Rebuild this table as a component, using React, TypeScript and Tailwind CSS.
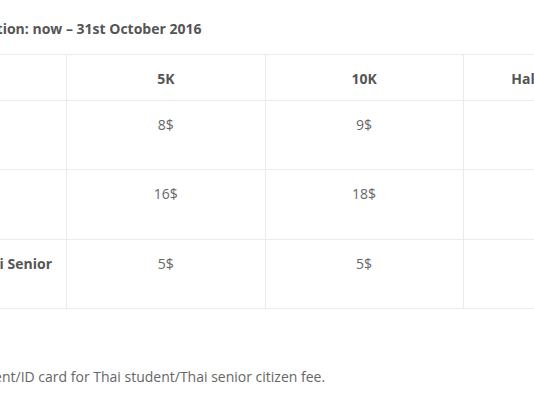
const rows = [
  { label: "Thai", values: ["8$", "9$", "10$"] },
  { label: "Foreigner", values: ["16$", "18$", "20$"] },
  { label: "Thai Student/Thai Senior", values: ["5$", "5$", "5$"] },
];

export default function App() {
  return (
    <div className="h-[404px] w-[534px] overflow-hidden bg-white font-['Open_Sans',sans-serif] text-[14px] text-[#666]">
      <div className="-ml-[132px] w-[794px] pt-[17px]">
        <h3 className="mb-[13px] text-[14px] font-bold leading-[24px] text-[#555]">
          Early Bird Registration: now – 31st October 2016
        </h3>
        <table className="w-full table-fixed border-collapse">
          <thead>
            <tr className="h-[46px]">
              <th className="border border-[#ebebeb] align-top"></th>
              <th className="border border-[#ebebeb] pt-[12px] align-top text-[14px] leading-[24px] font-bold text-[#555]">5K</th>
              <th className="border border-[#ebebeb] pt-[12px] align-top text-[14px] leading-[24px] font-bold text-[#555]">10K</th>
              <th className="border border-[#ebebeb] pt-[12px] align-top text-[14px] leading-[24px] font-bold text-[#555]">Half Marathon</th>
            </tr>
          </thead>
          <tbody>
            {rows.map((r, i) => (
              <tr key={r.label} className={i === 1 ? "h-[70px]" : "h-[69px]"}>
                <td className="whitespace-nowrap border border-[#ebebeb] pt-[12px] pl-[10px] align-top leading-[24px] font-bold text-[#555]">
                  {r.label}
                </td>
                {r.values.map((v, j) => (
                  <td key={j} className="border border-[#ebebeb] pt-[12px] text-center align-top leading-[24px]">
                    {v}
                  </td>
                ))}
              </tr>
            ))}
          </tbody>
        </table>
        <p className="mt-[56px] ml-[2px] leading-[24px]">
          * Please show student/ID card for Thai student/Thai senior citizen fee.
        </p>
      </div>
    </div>
  );
}
